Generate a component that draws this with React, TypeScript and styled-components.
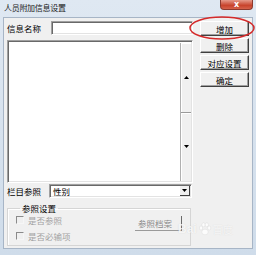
import React from "react";
import styled, { createGlobalStyle } from "styled-components";

const Global = createGlobalStyle`
  html, body { margin: 0; padding: 0; }
  body {
    width: 256px; height: 255px; overflow: hidden;
    font-family: "Noto Sans CJK SC", "Noto Sans", sans-serif;
    background: #d6e2ef;
  }
`;

const Window = styled.div`
  position: relative;
  width: 256px;
  height: 255px;
  box-sizing: border-box;
  padding: 0 3px 6px 3px;
  display: flex;
  flex-direction: column;
  background: linear-gradient(#dfe8f2, #cfdcea);
  overflow: hidden;
`;

const TitleBar = styled.div`
  height: 17px;
  flex: none;
  display: flex;
  justify-content: space-between;
  align-items: flex-start;
`;

const Title = styled.span`
  font-size: 8px;
  line-height: 10px;
  margin: 3px 0 0 1px;
  color: #1a1a1a;
  letter-spacing: -0.3px;
`;

const CloseButton = styled.div`
  width: 31px;
  height: 9px;
  border-radius: 0 0 4px 4px;
  background: linear-gradient(#e59a8a, #c8432c 60%, #d5614a);
  border: 1px solid #8d3a2e;
  border-top: none;
  display: flex;
  align-items: center;
  justify-content: center;
  color: #fff;
  font-family: "DejaVu Sans", sans-serif;
  font-size: 8px;
  font-weight: bold;
  line-height: 8px;
`;

const Client = styled.div`
  flex: 1;
  background: #f0f0f0;
  border: 1px solid #a7b5c6;
  display: grid;
  grid-template-columns: 186px 49px;
  column-gap: 7px;
  padding: 3px 0 0 3px;
  font-size: 8.5px;
  color: #000;
`;

const LeftCol = styled.div`
  display: flex;
  flex-direction: column;
`;

const Row = styled.div<{ $top?: number }>`
  display: flex;
  align-items: center;
  height: 14px;
  margin-top: ${(p) => p.$top ?? 0}px;
`;

const Label = styled.span<{ $w: number }>`
  width: ${(p) => p.$w}px;
  flex: none;
  line-height: 10px;
  white-space: nowrap;
`;

const sunken = `
  box-sizing: border-box;
  background: #fff;
  border-top: 1px solid #a0a0a0;
  border-left: 1px solid #a0a0a0;
  border-right: 1px solid #ffffff;
  border-bottom: 1px solid #ffffff;
  box-shadow: inset 1px 1px 0 #696969, inset -1px -1px 0 #e3e3e3;
`;

const TextInput = styled.div`
  ${sunken}
  flex: 1;
  height: 14px;
`;

const ListBox = styled.div`
  ${sunken}
  margin-top: 5px;
  height: 143px;
  display: flex;
  justify-content: flex-end;
  padding: 2px 1px 1px 2px;
`;

const ScrollBar = styled.div`
  width: 10px;
  display: flex;
  flex-direction: column;
  background: #f0f0f0;
  border-left: 1px solid #b0b0b0;
`;

const ScrollHalf = styled.div<{ $first?: boolean }>`
  flex: 1;
  display: flex;
  align-items: center;
  justify-content: center;
  border-bottom: ${(p) => (p.$first ? "1px solid #9a9a9a" : "none")};
  box-shadow: inset 1px 1px 0 #fff;
`;

const Combo = styled.div`
  ${sunken}
  flex: 1;
  height: 14px;
  margin-right: 1px;
  display: flex;
  align-items: center;
  justify-content: space-between;
  padding-left: 3px;
  line-height: 10px;
`;

const DropButton = styled.div`
  width: 10px;
  height: 10px;
  margin-right: 1px;
  background: #f0f0f0;
  border-right: 1px solid #404040;
  border-bottom: 1px solid #404040;
  box-sizing: border-box;
  display: flex;
  align-items: center;
  justify-content: center;
`;

const Group = styled.fieldset`
  margin: 5px 2px 0 0;
  padding: 2px 8px 0 8px;
  height: 43px;
  box-sizing: border-box;
  border: 1px solid #d5d5d5;
  box-shadow: 1px 1px 0 #fff inset;
  display: flex;
  justify-content: space-between;
  min-width: 0;
`;

const Legend = styled.legend`
  padding: 0 2px;
  margin-left: 4px;
  line-height: 10px;
  font-size: 8.5px;
`;

const CheckCol = styled.div`
  display: flex;
  flex-direction: column;
  gap: 6px;
`;

const CheckRow = styled.div`
  display: flex;
  align-items: center;
  gap: 4px;
  color: #a3a3a3;
  line-height: 10px;
  height: 10px;
`;

const CheckBox = styled.span`
  width: 8px;
  height: 8px;
  box-sizing: border-box;
  border-top: 1px solid #8a8a8a;
  border-left: 1px solid #8a8a8a;
  border-right: 1px solid #f6f6f6;
  border-bottom: 1px solid #f6f6f6;
`;

const FlatButton = styled.div`
  margin-top: 1px;
  width: 47px;
  height: 15px;
  box-sizing: border-box;
  border-right: 1px solid #6a6a6a;
  border-bottom: 1px solid #9a9a9a;
  display: flex;
  align-items: center;
  justify-content: center;
  color: #8a8a8a;
  line-height: 10px;
  padding-right: 6px;
`;

const RightCol = styled.div`
  display: flex;
  flex-direction: column;
  gap: 2px;
`;

const Button = styled.div`
  height: 15px;
  box-sizing: border-box;
  background: #f0f0f0;
  border-top: 1px solid #fff;
  border-left: 1px solid #fff;
  border-right: 1px solid #404040;
  border-bottom: 1px solid #404040;
  box-shadow: inset -1px -1px 0 #a0a0a0;
  display: flex;
  align-items: center;
  justify-content: center;
  line-height: 10px;
  white-space: nowrap;
`;

const Annotation = styled.svg`
  position: absolute;
  left: 186px;
  top: 14px;
  pointer-events: none;
`;

const Watermark = styled.div`
  position: absolute;
  left: 178px;
  top: 222px;
  display: flex;
  align-items: flex-end;
  gap: 1px;
  font-family: "Liberation Sans", sans-serif;
  font-size: 12px;
  line-height: 13px;
  font-weight: bold;
  color: rgba(255, 255, 255, 0.75);
  text-shadow: 0 0 1px rgba(160, 160, 160, 0.35);
  pointer-events: none;
`;

const WatermarkCjk = styled.span`
  font-family: "Noto Sans CJK SC", sans-serif;
  font-size: 10px;
  font-weight: normal;
`;

const Arrow = ({ up }: { up?: boolean }) => (
  <svg width="5" height="3" viewBox="0 0 5 3">
    <polygon points={up ? "2.5,0 5,3 0,3" : "0,0 5,0 2.5,3"} fill="#000" />
  </svg>
);

const Paw = () => (
  <svg width="14" height="14" viewBox="0 0 14 14">
    <g fill="rgba(255,255,255,0.8)" stroke="rgba(170,170,170,0.3)" strokeWidth="0.5">
      <ellipse cx="3" cy="6" rx="1.6" ry="2" />
      <ellipse cx="5.5" cy="2.8" rx="1.6" ry="2" />
      <ellipse cx="8.8" cy="2.8" rx="1.6" ry="2" />
      <ellipse cx="11.2" cy="6" rx="1.6" ry="2" />
      <ellipse cx="7" cy="10" rx="3.2" ry="2.8" />
    </g>
  </svg>
);

export default function App() {
  return (
    <>
      <Global />
      <Window>
        <TitleBar>
          <Title>人员附加信息设置</Title>
          <CloseButton>x</CloseButton>
        </TitleBar>
        <Client>
          <LeftCol>
            <Row>
              <Label $w={44}>信息名称</Label>
              <TextInput />
            </Row>
            <ListBox>
              <ScrollBar>
                <ScrollHalf $first>
                  <Arrow up />
                </ScrollHalf>
                <ScrollHalf>
                  <Arrow />
                </ScrollHalf>
              </ScrollBar>
            </ListBox>
            <Row $top={1}>
              <Label $w={42}>栏目参照</Label>
              <Combo>
                <span>性别</span>
                <DropButton>
                  <Arrow />
                </DropButton>
              </Combo>
            </Row>
            <Group>
              <Legend>参照设置</Legend>
              <CheckCol>
                <CheckRow>
                  <CheckBox />
                  是否参照
                </CheckRow>
                <CheckRow>
                  <CheckBox />
                  是否必输项
                </CheckRow>
              </CheckCol>
              <FlatButton>参照档案</FlatButton>
            </Group>
          </LeftCol>
          <RightCol>
            <Button>增加</Button>
            <Button>删除</Button>
            <Button>对应设置</Button>
            <Button>确定</Button>
          </RightCol>
        </Client>
        <Watermark>
          <span>Bai</span>
          <Paw />
          <WatermarkCjk>百度</WatermarkCjk>
        </Watermark>
        <Annotation width="70" height="30" viewBox="0 0 70 30">
          <ellipse cx="36" cy="14" rx="32" ry="11" fill="none" stroke="#d42a2a" strokeWidth="1.5" />
        </Annotation>
      </Window>
    </>
  );
}
